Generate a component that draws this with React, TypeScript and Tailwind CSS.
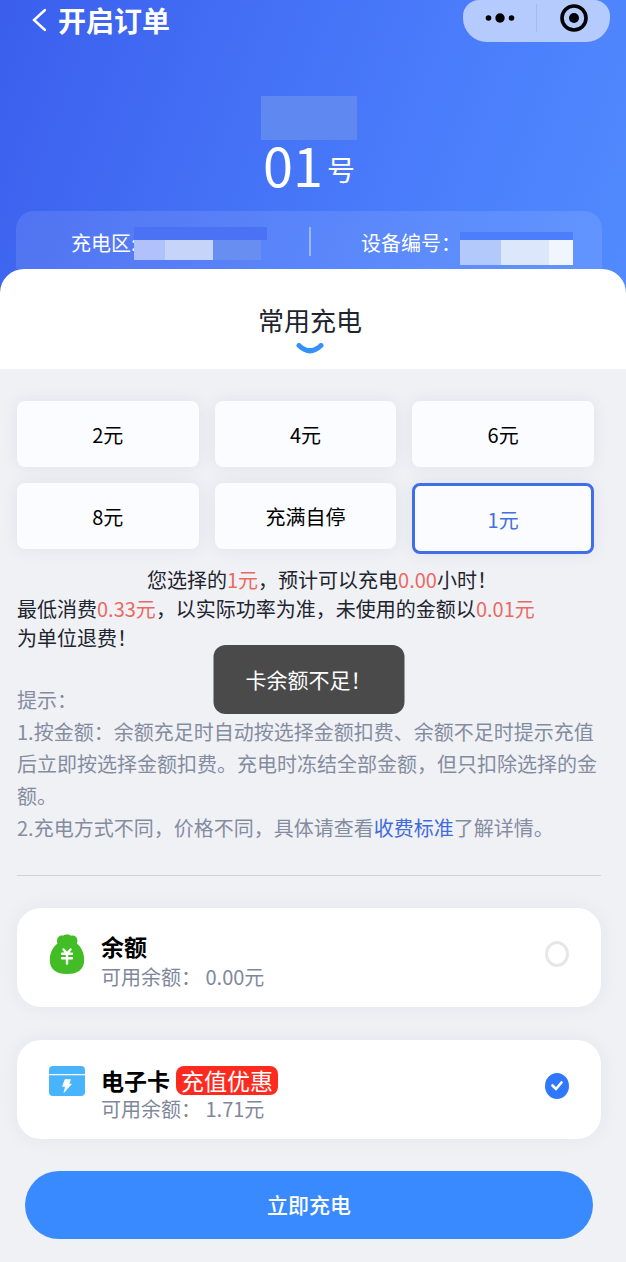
import React, { useState } from "react";

const amounts = ["2元", "4元", "6元", "8元", "充满自停", "1元"];

const MoneyBagIcon = () => (
  <svg className="w-9 h-10" viewBox="0 0 36 40" fill="none" aria-hidden="true">
    <path
      d="M8.500 9.500C7.500 7 8 4.500 9.500 3C11 1.500 12.500 1.300 14 1.800C15.500-.1 20.500-.1 22 1.800C23.500 1.300 25.500 1.500 27 3C28.500 4.500 28.800 7 27.800 9.500C32.500 13 35.200 19 35.200 26C35.200 35.500 29 40 18 40C7 40 .8 35.500 .8 26C.8 19 3.800 13 8.500 9.500Z"
      fill="#43bd25"
    />
    <path
      d="M14.500 15.500L18 19.500L21.500 15.500M13 19.700H23M13 24.300H23M18 19.500V29.500"
      stroke="#fff"
      strokeWidth="2.400"
      strokeLinecap="round"
    />
  </svg>
);

const CardIcon = () => (
  <svg className="w-9 h-[30px]" viewBox="0 0 36 30" aria-hidden="true">
    <path d="M4 0H32Q36 0 36 4V8H0V4Q0 0 4 0Z" fill="#49b4fe" />
    <path d="M0 9.300H36V26Q36 30 32 30H4Q0 30 0 26Z" fill="#49b4fe" />
    <path
      d="M16 13.500H21.500L20 18H22.500L15 26.500L16.500 20.500H13.500Z"
      fill="#fff"
      stroke="#fff"
      strokeWidth="0.600"
      strokeLinejoin="round"
    />
  </svg>
);

type PayOptionProps = {
  id: string;
  icon: React.ReactNode;
  iconClass: string;
  title: React.ReactNode;
  titleClass: string;
  balance: string;
  checked: boolean;
  onSelect: () => void;
};

const PayOption = ({
  id,
  icon,
  iconClass,
  title,
  titleClass,
  balance,
  checked,
  onSelect,
}: PayOptionProps) => {
  return (
    <label
      htmlFor={id}
      className="flex items-start bg-white rounded-3xl px-8 pt-[22px] pb-[19px] shadow-[0_0_20px_rgba(40,50,90,0.06)]"
    >
      <span className={`flex items-center ${iconClass}`}>{icon}</span>
      <span className="flex-1 ml-4">
        <span className={`flex h-9 text-[23px] leading-8 font-bold text-black ${titleClass}`}>
          {title}
        </span>
        <span className="block text-xl leading-[22px] text-[#7f879c]">
          可用余额： {balance}
        </span>
      </span>
      <span className="relative flex items-center h-12">
        <input
          id={id}
          type="radio"
          name="pay"
          checked={checked}
          onChange={onSelect}
          className="appearance-none w-6 h-[26px] rounded-[50%] border-3 border-[#e7e7e7] checked:border-[#3078fb] checked:bg-[#3078fb]"
        />
        {checked && (
          <svg
            className="absolute left-1.5 top-[18px] w-3 h-3 pointer-events-none"
            viewBox="0 0 12 12"
            fill="none"
            aria-hidden="true"
          >
            <path
              d="M1.500 5.500L5 9L10.500 2.500"
              stroke="#fff"
              strokeWidth="2.600"
              strokeLinecap="round"
              strokeLinejoin="round"
            />
          </svg>
        )}
      </span>
    </label>
  );
};

export default function App() {
  const [amount, setAmount] = useState("1元");
  const [pay, setPay] = useState("card");

  return (
    <div className="min-h-screen bg-[#f0f1f5] pb-5 font-['Noto_Sans_CJK_SC',sans-serif] text-[#20242e]">
      <div className="bg-linear-[110deg] from-[#3b5eed] via-[#4777f9] to-[#528cff] text-white">
        <header className="flex items-start justify-between pl-8 pr-4 h-24">
          <div className="flex items-center h-10">
            <button type="button" aria-label="返回" className="w-[26px]">
              <svg className="w-4 h-6" viewBox="0 0 16 24" fill="none">
                <path d="M13 2L2 12L13 22" stroke="#fff" strokeWidth="2.400" strokeLinecap="round" />
              </svg>
            </button>
            <h1 className="text-[28px] leading-[42px] font-bold">开启订单</h1>
          </div>
          <div className="flex items-center w-[147px] h-[42px] pb-1.5 rounded-b-3xl rounded-t-2xl bg-[#b5cbfd]">
            <button type="button" aria-label="更多" className="flex-1 flex justify-center">
              <svg className="w-[30px] h-3" viewBox="0 0 30 12">
                <circle cx="3.500" cy="6" r="2.800" />
                <circle cx="15" cy="6" r="4.700" />
                <circle cx="26.500" cy="6" r="2.800" />
              </svg>
            </button>
            <span className="w-px h-7 bg-[#a3bbf5]" />
            <button type="button" aria-label="关闭" className="flex-1 flex justify-center">
              <svg className="w-7 h-7" viewBox="0 0 28 28" fill="none">
                <circle cx="14" cy="14" r="12" stroke="#000" strokeWidth="3.600" />
                <circle cx="14" cy="14" r="5" fill="#000" />
              </svg>
            </button>
          </div>
        </header>

        <div className="flex flex-col items-center pr-2">
          <div className="w-24 h-11 bg-[#5f88f0]" />
          <p className="flex items-start gap-1 h-[71px] text-[54px] leading-[48px]">
            01<span className="text-[28px] leading-[58px]">号</span>
          </p>
        </div>

        <div className="flex ml-4 mr-6 h-[58px] rounded-t-[18px] bg-white/10 text-xl leading-[64px]">
          <div className="flex w-1/2 pl-[55px]">
            <span className="w-[63px] whitespace-nowrap">充电区:</span>
            <div className="w-[133px] pt-4">
              <div className="h-[13px] bg-[#4b71f4]" />
              <div className="flex h-5">
                <span className="w-[31px] bg-[#b0c1fb]" />
                <span className="w-12 bg-[#c6d4f9]" />
                <span className="w-12 bg-[#688ef2]" />
              </div>
            </div>
          </div>
          <span className="w-0.5 h-[29px] mt-4 bg-white/40" />
          <div className="flex flex-1 pl-[50px]">
            <span className="w-[99px] whitespace-nowrap">设备编号：</span>
            <div className="pt-[21px]">
              <div className="h-2 bg-[#4c7efc]" />
              <div className="flex h-[25px]">
                <span className="w-[41px] bg-[#b3c9fb]" />
                <span className="w-12 bg-[#dce7fb]" />
                <span className="w-6 bg-[#f0f5fe]" />
              </div>
            </div>
          </div>
        </div>

        <div className="flex flex-col items-center h-[100px] pt-8 pr-1.5 rounded-t-3xl bg-white text-[#20242e]">
          <h2 className="text-[26px] leading-[38px]">常用充电</h2>
          <svg className="w-7 h-3 mt-1" viewBox="0 0 28 12" fill="none" aria-hidden="true">
            <path d="M3 2.500Q14 13 25 2.500" stroke="#3491fa" strokeWidth="5" strokeLinecap="round" />
          </svg>
        </div>
      </div>

      <main className="pl-[17px] pr-[25px] pt-8">
        <div className="grid grid-cols-3 gap-4 items-start mr-[7px] h-[153px] text-xl text-black">
          {amounts.map((item) => (
            <button
              key={item}
              type="button"
              onClick={() => setAmount(item)}
              className={`rounded-lg bg-[#fafcff] pt-0.5 shadow-[0_0_16px_rgba(60,80,130,0.09)] ${
                item === amount
                  ? "h-[71px] border-3 border-[#3f6fe8] text-[#4470dc]"
                  : "h-[66px]"
              }`}
            >
              {item}
            </button>
          ))}
        </div>

        <div className="relative pt-[11px]">
          <p className="text-xl leading-[29px] indent-[130px]">
            您选择的<span className="text-[#ea6a62]">1元</span>，预计可以充电
            <span className="text-[#ea6a62]">0.00</span>小时！
          </p>
          <p className="text-xl leading-[29px]">
            最低消费<span className="text-[#ea6a62]">0.33元</span>，以实际功率为准，未使用的金额以
            <span className="text-[#ea6a62]">0.01元</span>
            <br />
            为单位退费！
          </p>
          <div
            role="status"
            className="absolute left-1/2 top-[91px] -translate-x-1/2 w-[191px] h-[69px] pl-8 rounded-xl bg-[#4a4a4a] text-white text-[21px] leading-[68px] whitespace-nowrap"
          >
            卡余额不足！
          </div>
        </div>

        <div className="mt-8 pb-[31px] border-b border-[#cfd2d8] text-xl leading-8 text-[#848ca0]">
          <p>提示：</p>
          <p>
            1.按金额：余额充足时自动按选择金额扣费、余额不足时提示充值后立即按选择金额扣费。充电时冻结全部金额，但只扣除选择的金额。
          </p>
          <p>
            2.充电方式不同，价格不同，具体请查看
            <a href="#" className="text-[#3f6bdc]">收费标准</a>
            了解详情。
          </p>
        </div>

        <div className="flex flex-col gap-[33px] mt-8">
          <PayOption
            id="pay-balance"
            icon={<MoneyBagIcon />}
            iconClass="h-12"
            title="余额"
            titleClass="items-start"
            balance="0.00元"
            checked={pay === "balance"}
            onSelect={() => setPay("balance")}
          />
          <PayOption
            id="pay-card"
            icon={<CardIcon />}
            iconClass="h-[38px]"
            title={
              <>
                电子卡
                <span className="ml-1.5 px-[5px] rounded-lg bg-[#fd2b1f] font-normal leading-[29px] text-white">
                  充值优惠
                </span>
              </>
            }
            titleClass="items-center"
            balance="1.71元"
            checked={pay === "card"}
            onSelect={() => setPay("card")}
          />
        </div>

        <div className="px-2 mt-8">
          <button
            type="button"
            className="w-full h-[68px] rounded-full bg-[#398aff] text-[21px] font-medium text-white"
          >
            立即充电
          </button>
        </div>
      </main>
    </div>
  );
}
